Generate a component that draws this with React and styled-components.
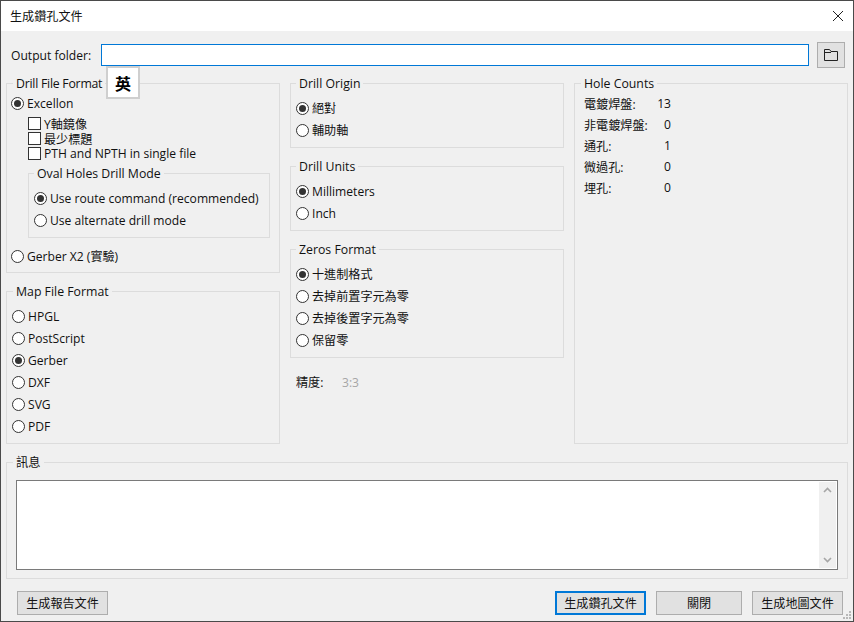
import React from "react";
import styled, { createGlobalStyle } from "styled-components";

const GlobalStyle = createGlobalStyle`
  * { box-sizing: border-box; }
  html, body { margin: 0; padding: 0; background: #f0f0f0; }
  body {
    font-family: "Open Sans", "Noto Sans CJK TC", sans-serif;
    font-size: 12.1px;
    color: #111;
  }
`;

const Window = styled.div`
  position: relative;
  width: 854px;
  height: 622px;
  border: 1px solid #4a4a4a;
  background: #f0f0f0;
  overflow: hidden;
`;

const TitleBar = styled.div`
  display: flex;
  align-items: center;
  justify-content: space-between;
  height: 30px;
  padding: 0 9px 0 9px;
  background: #fff;
`;

const Content = styled.div`
  padding: 11px 5px 0;
`;

const FolderRow = styled.div`
  display: flex;
  align-items: center;
  height: 26px;
  padding: 0 2px 0 5px;
`;

const FolderLabel = styled.span`
  width: 90px;
`;

const FolderInput = styled.input`
  width: 708px;
  height: 22px;
  padding: 0 2px;
  border: 1px solid #0078d7;
  outline: none;
  background: #fff;
`;

const IconButton = styled.button`
  display: flex;
  align-items: center;
  justify-content: center;
  width: 28px;
  height: 26px;
  margin-left: 8px;
  padding: 0;
  border: 1px solid #adadad;
  background: #e1e1e1;
`;

const ImeBadge = styled.div`
  position: absolute;
  left: 105px;
  top: 65px;
  display: flex;
  align-items: center;
  justify-content: center;
  width: 34px;
  height: 33px;
  border: 2px solid #cfcfcf;
  background: #fff;
  color: #000;
  font-size: 16px;
  font-weight: 700;
`;

const Columns = styled.div`
  display: grid;
  grid-template-columns: repeat(3, 274px);
  column-gap: 10px;
  margin-top: 7px;
`;

const Column = styled.div`
  display: flex;
  flex-direction: column;
  gap: 10px;
`;

const Group = styled.fieldset`
  flex: ${(p) => (p.$grow ? 1 : "none")};
  min-width: 0;
  margin: 0;
  padding: ${(p) => p.$top ?? 6}px 4px ${(p) => p.$bottom ?? 6}px ${(p) => p.$left ?? 5}px;
  border: 1px solid #dcdcdc;
`;

const Legend = styled.legend`
  margin-left: ${(p) => p.$shift ?? 0}px;
  padding: 0 3px;
  height: 16px;
  line-height: 18px;
  font-size: 12.3px;
  letter-spacing: ${(p) => (p.$tight ? "-0.25px" : "normal")};
`;

const OptionRow = styled.div`
  display: flex;
  align-items: center;
  gap: 3px;
  height: 22px;
`;

const RadioMark = styled.span`
  position: relative;
  flex: none;
  width: 13px;
  height: 13px;
  border: 1px solid #333;
  border-radius: 50%;
  background: #fff;

  &::after {
    content: "";
    display: ${(p) => (p.$checked ? "block" : "none")};
    position: absolute;
    left: 2px;
    top: 2px;
    width: 7px;
    height: 7px;
    border-radius: 50%;
    background: #333;
  }
`;

const CheckList = styled.div`
  margin-top: 2px;
  padding-left: 17px;
`;

const CheckRow = styled.div`
  display: flex;
  align-items: center;
  gap: 3px;
  height: 15px;
`;

const CheckMark = styled.span`
  flex: none;
  width: 13px;
  height: 13px;
  border: 1px solid #333;
  background: #fff;
`;

const SubGroup = styled(Group)`
  width: 242px;
  margin: 4px 0 0 17px;
`;

const SpacedOption = styled(OptionRow)`
  margin-top: 7px;
`;

const PrecisionRow = styled.div`
  display: flex;
  align-items: center;
  height: 16px;
  margin-top: 6px;
  padding-left: 6px;
`;

const PrecisionLabel = styled.span`
  width: 46px;
`;

const PrecisionValue = styled.span`
  color: #a6a6a6;
`;

const CountRow = styled.div`
  display: flex;
  justify-content: space-between;
  align-items: center;
  width: 87px;
  height: 21px;
  margin-left: 4px;
`;

const MessageGroup = styled(Group)`
  margin-top: 10px;
  padding: 10px 9px 8px;
`;

const MessageBox = styled.div`
  display: flex;
  justify-content: flex-end;
  height: 90px;
  padding: 1px;
  border: 1px solid #7a7a7a;
  background: #fff;
`;

const ScrollBar = styled.div`
  display: flex;
  flex-direction: column;
  justify-content: space-between;
  align-items: center;
  width: 17px;
  padding: 5px 0;
  background: #f0f0f0;
`;

const ButtonRow = styled.div`
  display: flex;
  justify-content: space-between;
  margin: 12px 5px 0 11px;
`;

const ButtonGroup = styled.div`
  display: flex;
  gap: 10px;
`;

const Button = styled.button`
  width: ${(p) => p.$width}px;
  height: 24px;
  padding: 0;
  border: ${(p) => (p.$primary ? "2px solid #0078d7" : "1px solid #adadad")};
  background: #e1e1e1;
  color: #111;
  font: inherit;
`;

const Grip = styled.svg`
  position: absolute;
  right: 1px;
  bottom: 1px;
`;

const Radio = ({ checked, children }) => (
  <OptionRow>
    <RadioMark $checked={checked} />
    <span>{children}</span>
  </OptionRow>
);

const Check = ({ children }) => (
  <CheckRow>
    <CheckMark />
    <span>{children}</span>
  </CheckRow>
);

const counts = [
  ["電鍍焊盤:", 13],
  ["非電鍍焊盤:", 0],
  ["通孔:", 1],
  ["微過孔:", 0],
  ["埋孔:", 0],
];

export default function App() {
  return (
    <Window>
      <GlobalStyle />
      <TitleBar>
        <span>生成鑽孔文件</span>
        <svg width="12" height="12" viewBox="0 0 12 12">
          <path d="M1 1l10 10M11 1L1 11" stroke="#222" strokeWidth="1" fill="none" />
        </svg>
      </TitleBar>
      <Content>
        <FolderRow>
          <FolderLabel>Output folder:</FolderLabel>
          <FolderInput readOnly />
          <IconButton>
            <svg width="16" height="14" viewBox="0 0 16 14">
              <path
                d="M1.5 12.5V1.5h5l1.5 2h6.5v9zM1.5 4.5h6.5"
                stroke="#222"
                strokeWidth="1"
                fill="none"
              />
            </svg>
          </IconButton>
        </FolderRow>
        <Columns>
          <Column>
            <Group $top={1} $bottom={5} $left={4}>
              <Legend $shift={2} $tight>Drill File Format</Legend>
              <Radio checked>Excellon</Radio>
              <CheckList>
                <Check>Y軸鏡像</Check>
                <Check>最少標題</Check>
                <Check>PTH and NPTH in single file</Check>
              </CheckList>
              <SubGroup>
                <Legend>Oval Holes Drill Mode</Legend>
                <Radio checked>Use route command (recommended)</Radio>
                <Radio>Use alternate drill mode</Radio>
              </SubGroup>
              <SpacedOption>
                <RadioMark />
                <span>Gerber X2 (實驗)</span>
              </SpacedOption>
            </Group>
            <Group>
              <Legend $shift={1}>Map File Format</Legend>
              <Radio>HPGL</Radio>
              <Radio>PostScript</Radio>
              <Radio checked>Gerber</Radio>
              <Radio>DXF</Radio>
              <Radio>SVG</Radio>
              <Radio>PDF</Radio>
            </Group>
          </Column>
          <Column>
            <Group>
              <Legend>Drill Origin</Legend>
              <Radio checked>絕對</Radio>
              <Radio>輔助軸</Radio>
            </Group>
            <Group>
              <Legend>Drill Units</Legend>
              <Radio checked>Millimeters</Radio>
              <Radio>Inch</Radio>
            </Group>
            <Group>
              <Legend>Zeros Format</Legend>
              <Radio checked>十進制格式</Radio>
              <Radio>去掉前置字元為零</Radio>
              <Radio>去掉後置字元為零</Radio>
              <Radio>保留零</Radio>
            </Group>
            <PrecisionRow>
              <PrecisionLabel>精度:</PrecisionLabel>
              <PrecisionValue>3:3</PrecisionValue>
            </PrecisionRow>
          </Column>
          <Column>
            <Group $grow $top={2}>
              <Legend $shift={1}>Hole Counts</Legend>
              {counts.map(([label, value]) => (
                <CountRow key={label}>
                  <span>{label}</span>
                  <span>{value}</span>
                </CountRow>
              ))}
            </Group>
          </Column>
        </Columns>
        <MessageGroup>
          <Legend $shift={-3}>訊息</Legend>
          <MessageBox>
            <ScrollBar>
              <svg width="9" height="6" viewBox="0 0 9 6">
                <path d="M1 5l3.5-3.5L8 5" stroke="#a6a6a6" strokeWidth="1.6" fill="none" />
              </svg>
              <svg width="9" height="6" viewBox="0 0 9 6">
                <path d="M1 1l3.5 3.5L8 1" stroke="#a6a6a6" strokeWidth="1.6" fill="none" />
              </svg>
            </ScrollBar>
          </MessageBox>
        </MessageGroup>
        <ButtonRow>
          <Button $width={91}>生成報告文件</Button>
          <ButtonGroup>
            <Button $width={91} $primary>生成鑽孔文件</Button>
            <Button $width={86}>關閉</Button>
            <Button $width={91}>生成地圖文件</Button>
          </ButtonGroup>
        </ButtonRow>
      </Content>
      <Grip width="10" height="10" viewBox="0 0 10 10" fill="#b8b8b8">
        <rect x="7" y="1" width="2" height="2" />
        <rect x="4" y="4" width="2" height="2" />
        <rect x="7" y="4" width="2" height="2" />
        <rect x="1" y="7" width="2" height="2" />
        <rect x="4" y="7" width="2" height="2" />
        <rect x="7" y="7" width="2" height="2" />
      </Grip>
      <ImeBadge>英</ImeBadge>
    </Window>
  );
}
